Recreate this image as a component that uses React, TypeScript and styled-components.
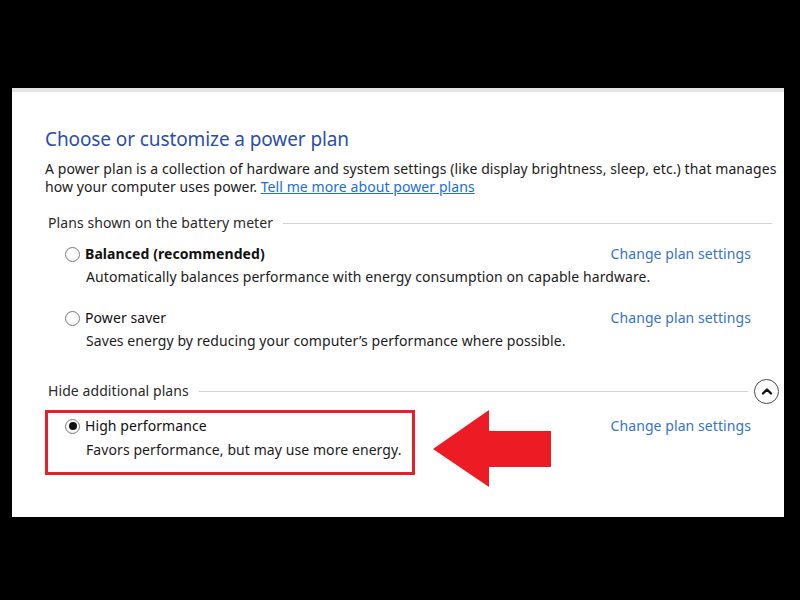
import React from 'react';
import styled, { createGlobalStyle } from 'styled-components';

const GlobalStyle = createGlobalStyle`
    html, body {
        margin: 0;
        padding: 0;
        background: #000;
    }
    body {
        font-family: "Noto Sans", "Open Sans", "Liberation Sans", sans-serif;
    }
`;

const plans = [
    {
        name: 'Balanced (recommended)',
        bold: true,
        text: 'Automatically balances performance with energy consumption on capable hardware.',
    },
    {
        name: 'Power saver',
        bold: false,
        text: "Saves energy by reducing your computer’s performance where possible.",
    },
];

const Radio: React.FC<{ checked?: boolean }> = ({ checked }) => (
    <StyledRadio $checked={checked}>{checked && <span />}</StyledRadio>
);

const App: React.FC = () => {
    return (
        <Page>
            <GlobalStyle />
            <Panel>
                <Title>Choose or customize a power plan</Title>
                <Intro>
                    A power plan is a collection of hardware and system settings (like display brightness, sleep, etc.) that manages
                    <br />
                    how your computer uses power. <Link href="#">Tell me more about power plans</Link>
                </Intro>

                <SectionHeader $top={17} $right={7}>
                    <span>Plans shown on the battery meter</span>
                    <Rule />
                </SectionHeader>

                {plans.map((p, i) => (
                    <PlanRow key={p.name} $top={i === 0 ? 11 : 21}>
                        <PlanName $bold={p.bold}>
                            <Radio />
                            {p.name}
                        </PlanName>
                        <ChangeLink href="#">Change plan settings</ChangeLink>
                        <PlanText>{p.text}</PlanText>
                    </PlanRow>
                ))}

                <SectionHeader $top={30} $right={0}>
                    <span>Hide additional plans</span>
                    <Rule />
                    <CollapseButton aria-label="Hide additional plans">
                        <svg width="12" height="8" viewBox="0 0 12 8">
                            <path d="M2 6.5 L6 2.5 L10 6.5" fill="none" stroke="#111" strokeWidth="2.4" strokeLinecap="round" strokeLinejoin="round" />
                        </svg>
                    </CollapseButton>
                </SectionHeader>

                <HighlightRow>
                    <HighlightBox>
                        <PlanName>
                            <Radio checked />
                            High performance
                        </PlanName>
                        <PlanText>Favors performance, but may use more energy.</PlanText>
                    </HighlightBox>
                    <Arrow width="118" height="77" viewBox="0 0 118 77">
                        <polygon points="0,39 56,0 56,21 118,21 118,57 56,57 56,77" fill="#ed1c24" />
                    </Arrow>
                    <ChangeLink href="#" style={{ marginTop: 6 }}>Change plan settings</ChangeLink>
                </HighlightRow>
            </Panel>
        </Page>
    );
};

export default App;

const Page = styled.div`
    width: 800px;
    height: 600px;
    background: #000;
    padding: 88px 16px 0 12px;
    box-sizing: border-box;
    overflow: hidden;
`;

const Panel = styled.div`
    width: 772px;
    height: 429px;
    box-sizing: border-box;
    background: #fff;
    border-top: 4px solid #e4e4e4;
    padding: 35px 5px 0 33px;
    display: flex;
    flex-direction: column;
    color: #1b1b1b;
    letter-spacing: 0.08px;
`;

const Title = styled.h1`
    margin: 0;
    font-size: 19px;
    line-height: 24px;
    font-weight: 400;
    color: #2c4ea6;
    letter-spacing: -0.1px;
`;

const Intro = styled.p`
    margin: 9px 0 0;
    font-size: 14px;
    line-height: 18px;
    white-space: nowrap;
`;

const Link = styled.a`
    color: #1a6ed8;
    text-decoration: underline;
`;

const SectionHeader = styled.div<{ $top: number; $right: number }>`
    height: 20px;
    margin-top: ${p => p.$top}px;
    margin-left: 3px;
    margin-right: ${p => p.$right}px;
    display: flex;
    align-items: center;
    gap: 10px;
    font-size: 14px;
    line-height: 20px;
    color: #2a2a2a;
`;

const Rule = styled.div`
    flex: 1;
    height: 1px;
    background: #d2d2d2;
`;

const CollapseButton = styled.button`
    width: 25px;
    height: 25px;
    margin-left: -4px;
    padding: 0;
    border-radius: 50%;
    border: 1.5px solid #4a4a4a;
    background: #fff;
    display: flex;
    align-items: center;
    justify-content: center;
    flex-shrink: 0;
`;

const PlanRow = styled.div<{ $top: number }>`
    margin-top: ${p => p.$top}px;
    padding: 0 28px 0 20px;
    display: grid;
    grid-template-columns: 1fr auto;
    align-items: start;
`;

const PlanName = styled.div<{ $bold?: boolean }>`
    display: flex;
    align-items: center;
    gap: 5px;
    font-size: 14px;
    line-height: 20px;
    font-weight: ${p => (p.$bold ? 700 : 400)};
    color: #111;
    white-space: nowrap;
`;

const PlanText = styled.div`
    grid-column: 1 / -1;
    margin: 3px 0 0 21px;
    font-size: 14px;
    line-height: 20px;
    color: #1b1b1b;
    white-space: nowrap;
`;

const StyledRadio = styled.span<{ $checked?: boolean }>`
    width: 15px;
    height: 15px;
    box-sizing: border-box;
    border-radius: 50%;
    border: 1px solid #7d7d7d;
    background: radial-gradient(circle at 50% 40%, #ffffff 30%, #ececec 100%);
    display: flex;
    align-items: center;
    justify-content: center;
    flex-shrink: 0;
    span {
        width: 8px;
        height: 8px;
        border-radius: 50%;
        background: #111;
    }
`;

const ChangeLink = styled.a`
    font-size: 14px;
    line-height: 20px;
    color: #3474cc;
    text-decoration: none;
    white-space: nowrap;
`;

const HighlightRow = styled.div`
    margin-top: 9px;
    padding-right: 28px;
    display: flex;
    align-items: flex-start;
`;

const HighlightBox = styled.div`
    width: 370px;
    height: 65px;
    box-sizing: border-box;
    border: 3px solid #e8202a;
    padding: 3px 0 0 17px;
    display: flex;
    flex-direction: column;
    flex-shrink: 0;
    ${PlanText} {
        margin-top: 4px;
    }
`;

const Arrow = styled.svg`
    margin-left: 18px;
    margin-right: auto;
    flex-shrink: 0;
`;
